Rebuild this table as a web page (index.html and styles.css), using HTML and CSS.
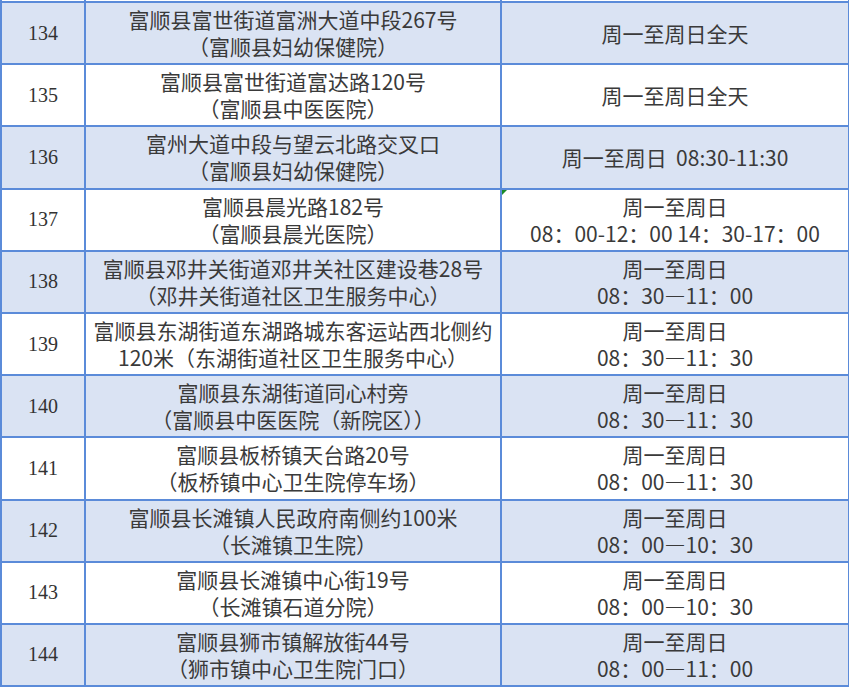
FILE: index.html
```html
<!DOCTYPE html>
<html lang="zh-CN">
<head>
<meta charset="utf-8">
<title>核酸采样点</title>
<link rel="stylesheet" href="styles.css">
</head>
<body>
<table class="sites">
  <colgroup><col class="c-no"><col class="c-addr"><col class="c-time"></colgroup>
  <tr class="cut"><td></td><td></td><td></td></tr>
  <tr class="alt"><td class="no">134</td><td>富顺县富世街道富洲大道中段267号<br>（富顺县妇幼保健院）</td><td>周一至周日全天</td></tr>
  <tr><td class="no">135</td><td>富顺县富世街道富达路120号<br>（富顺县中医医院）</td><td>周一至周日全天</td></tr>
  <tr class="alt"><td class="no">136</td><td>富州大道中段与望云北路交叉口<br>（富顺县妇幼保健院）</td><td>周一至周日&nbsp; 08:30-11:30</td></tr>
  <tr><td class="no">137</td><td>富顺县晨光路182号<br>（富顺县晨光医院）</td><td class="note">周一至周日<br>08：00-12：00&nbsp;14：30-17：00</td></tr>
  <tr class="alt"><td class="no">138</td><td>富顺县邓井关街道邓井关社区建设巷28号<br>（邓井关街道社区卫生服务中心）</td><td>周一至周日<br>08：30—11：00</td></tr>
  <tr><td class="no">139</td><td>富顺县东湖街道东湖路城东客运站西北侧约<br>120米（东湖街道社区卫生服务中心）</td><td>周一至周日<br>08：30—11：30</td></tr>
  <tr class="alt"><td class="no">140</td><td>富顺县东湖街道同心村旁<br>（富顺县中医医院（新院区））</td><td>周一至周日<br>08：30—11：30</td></tr>
  <tr><td class="no">141</td><td>富顺县板桥镇天台路20号<br>（板桥镇中心卫生院停车场）</td><td>周一至周日<br>08：00—11：30</td></tr>
  <tr class="alt"><td class="no">142</td><td>富顺县长滩镇人民政府南侧约100米<br>（长滩镇卫生院）</td><td>周一至周日<br>08：00—10：30</td></tr>
  <tr><td class="no">143</td><td>富顺县长滩镇中心街19号<br>（长滩镇石道分院）</td><td>周一至周日<br>08：00—10：30</td></tr>
  <tr class="alt"><td class="no">144</td><td>富顺县狮市镇解放街44号<br>（狮市镇中心卫生院门口）</td><td>周一至周日<br>08：00—11：00</td></tr>
</table>
</body>
</html>
```
FILE: styles.css
```css
html, body {
  margin: 0;
  padding: 0;
  background: #ffffff;
}

.sites {
  border-collapse: collapse;
  table-layout: fixed;
  width: 848px;
  font-family: "Noto Sans CJK SC", "Noto Sans", sans-serif;
  font-size: 21px;
  color: #3a3a3a;
}

.c-no { width: 84px; }
.c-addr { width: 416px; }
.c-time { width: 348px; }

.sites td {
  border: 2px solid #5b8bd9;
  padding: 0;
  height: 60.2px;
  text-align: center;
  vertical-align: middle;
  line-height: 27px;
  white-space: nowrap;
}

.sites tr.cut td {
  height: 1px;
  border-top: 0;
  line-height: 0;
  font-size: 0;
}

.sites tr.alt td {
  background: #dae3f3;
}

.sites td.no {
  font-family: "Liberation Serif", serif;
  font-size: 20px;
  color: #333333;
}

.sites td.note {
  position: relative;
}

.sites td.note::before {
  content: "";
  position: absolute;
  left: 0;
  top: 0;
  width: 0;
  height: 0;
  border-top: 5px solid #1a8a2a;
  border-right: 5px solid transparent;
}
```
